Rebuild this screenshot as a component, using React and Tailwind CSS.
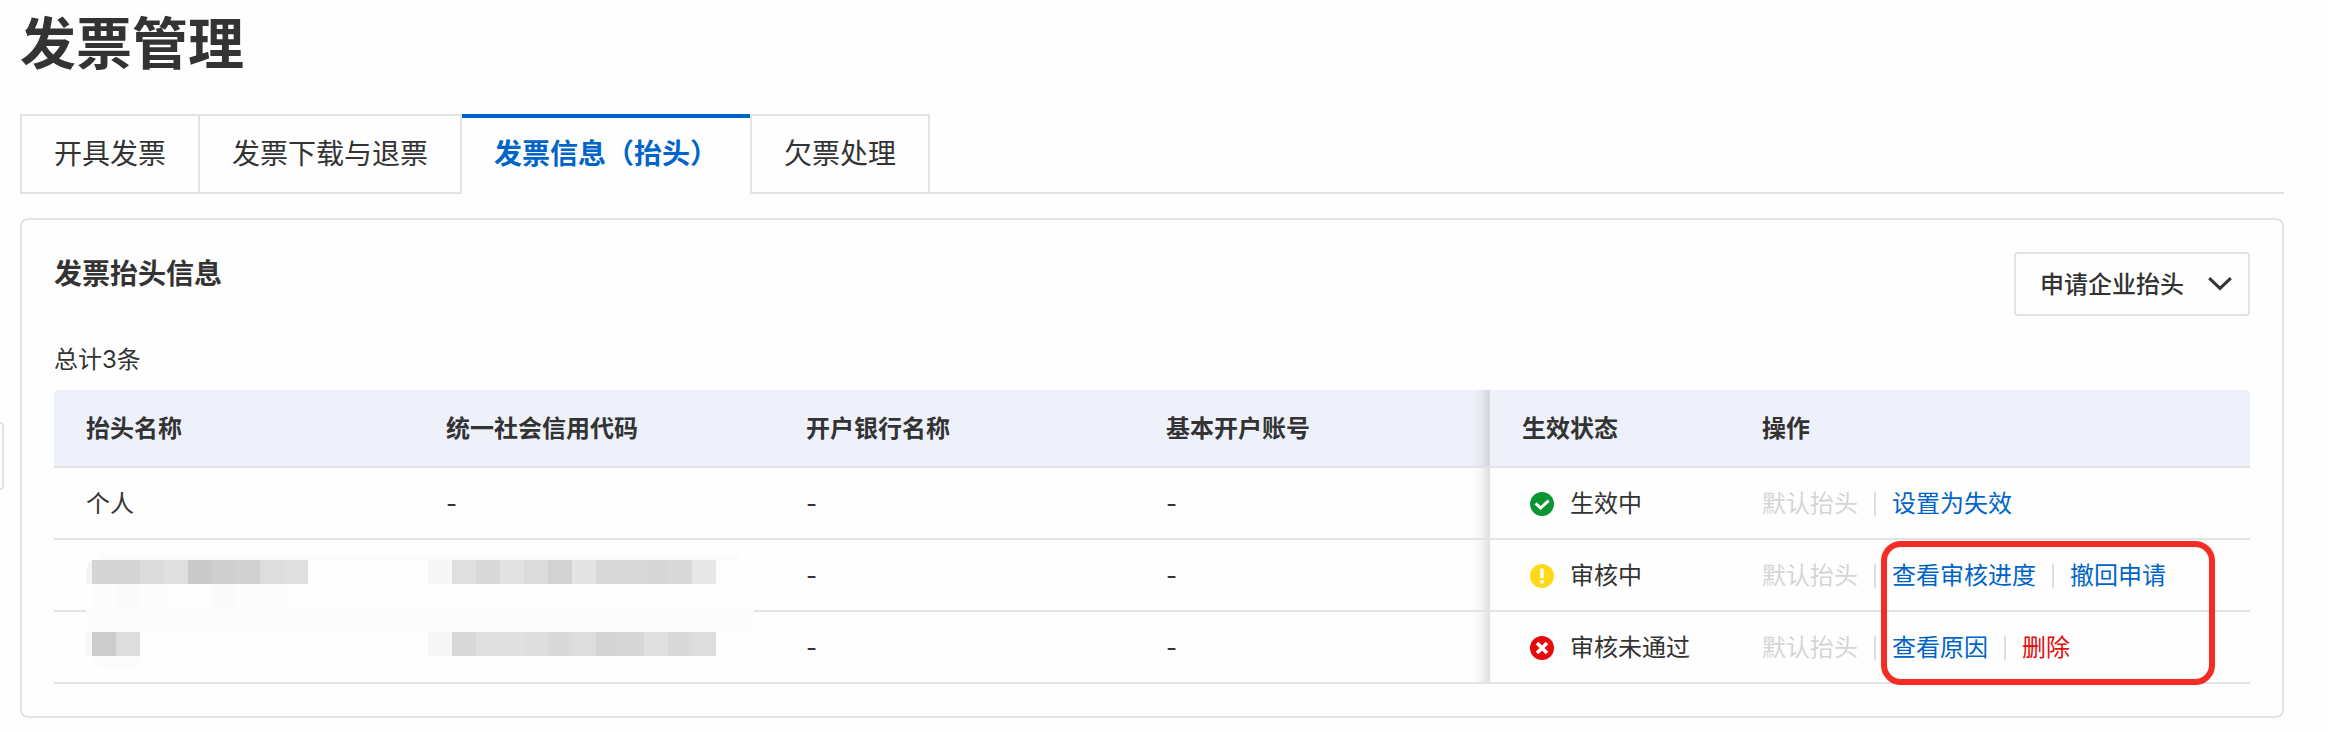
import { useState } from "react";
import clsx from "clsx";

const tabs = [
  { id: "issue", label: "开具发票" },
  { id: "download", label: "发票下载与退票" },
  { id: "titles", label: "发票信息（抬头）" },
  { id: "overdue", label: "欠票处理" },
];

const rows = [
  {
    id: 1,
    name: "个人",
    code: "-",
    status: "active",
    actions: [{ label: "设置为失效" }],
  },
  {
    id: 2,
    name: "",
    code: "",
    status: "pending",
    actions: [{ label: "查看审核进度" }, { label: "撤回申请" }],
  },
  {
    id: 3,
    name: "",
    code: "",
    status: "rejected",
    actions: [{ label: "查看原因" }, { label: "删除", danger: true }],
  },
];

// 24px tiles: [x, y, first-to-last fills]
const mosaic = [
  [6, 6, ["#d5d5d5", "#d4d4d4", "#dbdbdb", "#e0e0e0", "#cacaca", "#cfcfcf", "#d1d1d1", "#dddddd", "#dfdfdf"]],
  [6, 30, ["#fcfcfc", "#fafafa", "#fcfcfc", "#fdfdfd", "#fdfdfd", "#fafafa", "#fcfcfc", "#fcfcfc", "#fdfdfd"]],
  [342, 6, ["#f7f7f7", "#e0e0e0", "#d9d9d9", "#e1e1e1", "#dbdbdb", "#d2d2d2", "#e4e4e4", "#d9d9d9", "#d8d8d8", "#d7d7d7", "#d9d9d9", "#e8e8e8"]],
  [6, 78, ["#cccccc", "#dddddd"]],
  [342, 78, ["#f7f7f7", "#d9d9d9", "#e0e0e0", "#e0e0e0", "#dedede", "#d9d9d9", "#dddddd", "#d5d5d5", "#d6d6d6", "#e0e0e0", "#d9d9d9", "#dddddd"]],
];

function Mosaic() {
  return (
    <svg
      className="absolute left-8 top-[164px] h-[114px] w-[668px]"
      viewBox="0 0 668 114"
      shapeRendering="crispEdges"
      aria-hidden="true"
    >
      <rect width="668" height="114" rx="12" fill="#fefefe" />
      <rect y="20" width="668" height="70" fill="#fefefe" />
      <rect x="12" width="640" height="6" fill="#fbfbfb" />
      <rect y="54" width="668" height="24" fill="#fcfcfc" />
      <path d="M0 16Q1 9 6 6V30H0Z" fill="#f4f4f4" />
      <rect y="78" width="6" height="24" fill="#f6f6f6" />
      <path d="M6 102H54V114H16Q9 112 6 102Z" fill="#fbfbfb" />
      {mosaic.map(([x, y, fills]) =>
        fills.map((fill, i) => (
          <rect key={`${x}-${y}-${i}`} x={x + i * 24} y={y} width="24" height="24" fill={fill} />
        ))
      )}
    </svg>
  );
}

function StatusIcon({ type }) {
  return (
    <svg className="ml-2 size-6 shrink-0" viewBox="0 0 24 24" fill="none" aria-hidden="true">
      {type === "active" && (
        <>
          <circle cx="12" cy="12" r="12" fill="#0a9432" />
          <path d="M5.6 11.4L10.6 16L18.6 8.6" stroke="#fff" strokeWidth="3" />
        </>
      )}
      {type === "pending" && (
        <>
          <circle cx="12" cy="12" r="12" fill="#ffd91a" />
          <path d="M12 4.6V14M12 16.2V19.4" stroke="#fff" strokeWidth="3.4" />
        </>
      )}
      {type === "rejected" && (
        <>
          <circle cx="12" cy="12" r="12" fill="#e60b0b" />
          <path d="M7 7L17 17M17 7L7 17" stroke="#fff" strokeWidth="3.6" />
        </>
      )}
    </svg>
  );
}

const statusText = {
  active: "生效中",
  pending: "审核中",
  rejected: "审核未通过",
};

const cell = "h-[72px] border-b-2 border-[#e3e3e3] px-8 pt-0.5 text-left";
const headCell = "h-[78px] border-b-2 border-[#e3e3e3] bg-[#eef1f9] px-8 pt-0.5 text-left font-bold";
const fixedShadow =
  "bg-[linear-gradient(to_left,rgba(0,0,0,0.12),rgba(0,0,0,0.04)_50%,transparent)] bg-[length:18px_100%] bg-right bg-no-repeat";

export default function App() {
  const [activeTab, setActiveTab] = useState("titles");

  return (
    <div className="relative min-h-screen bg-[#fefefe] pt-3 pr-11 pb-3.5 pl-5 font-[Inter,'Noto_Sans_CJK_SC',sans-serif] text-2xl leading-8 text-[#333]">
      {/* Collapsed side menu handle */}
      <div className="absolute top-[422px] left-0 h-[68px] w-1 rounded-r-sm border-y-2 border-r-2 border-[#e3e3e3]" />

      <h1 className="mb-[38px] text-[56px] leading-[64px] font-bold">发票管理</h1>

      {/* Tabs */}
      <div role="tablist" className="mb-6 flex h-20">
        {tabs.map((tab, i) => {
          const active = tab.id === activeTab;
          const afterActive = i > 0 && tabs[i - 1].id === activeTab;

          return (
            <button
              key={tab.id}
              type="button"
              role="tab"
              aria-selected={active}
              onClick={() => setActiveTab(tab.id)}
              className={clsx(
                "px-8 text-[28px]",
                active
                  ? "border-t-4 border-[#0064c8] pb-1 font-bold text-[#0064c8]"
                  : "border-y-2 border-r-2 border-[#e3e3e3]",
                !active && (i === 0 || afterActive) && "border-l-2"
              )}
            >
              {tab.label}
            </button>
          );
        })}
        <div className="flex-1 border-b-2 border-[#e3e3e3]" />
      </div>

      <section className="rounded-lg border-2 border-[#e3e3e3] p-8">
        <div className="mb-6 flex items-start justify-between">
          <h2 className="pt-1 text-[28px] leading-9 font-bold">发票抬头信息</h2>
          <button
            type="button"
            aria-haspopup="menu"
            className="flex h-16 items-center gap-6 rounded border-2 border-[#e3e3e3] pt-0.5 pr-4 pl-6 font-medium"
          >
            申请企业抬头
            <svg className="size-6" viewBox="0 0 24 24" fill="none" aria-hidden="true">
              <path d="M1.2 5.2L12 15.4L22.8 5.2" stroke="#333" strokeWidth="3" />
            </svg>
          </button>
        </div>

        <p className="mb-2.5 leading-10">总计3条</p>

        <div className="relative">
          <table className="w-full table-fixed border-separate border-spacing-0">
            <colgroup>
              <col className="w-[360px]" />
              <col className="w-[360px]" />
              <col className="w-[360px]" />
              <col />
              <col className="w-[240px]" />
              <col className="w-[520px]" />
            </colgroup>
            <thead>
              <tr>
                <th className={clsx(headCell, "rounded-tl")}>抬头名称</th>
                <th className={headCell}>统一社会信用代码</th>
                <th className={headCell}>开户银行名称</th>
                <th className={clsx(headCell, fixedShadow)}>基本开户账号</th>
                <th className={headCell}>生效状态</th>
                <th className={clsx(headCell, "rounded-tr")}>操作</th>
              </tr>
            </thead>
            <tbody>
              {rows.map((row) => (
                <tr key={row.id}>
                  <td className={cell}>{row.name}</td>
                  <td className={cell}>{row.code}</td>
                  <td className={cell}>-</td>
                  <td className={clsx(cell, fixedShadow)}>-</td>
                  <td className={cell}>
                    <div className="flex items-center gap-4 whitespace-nowrap">
                      <StatusIcon type={row.status} />
                      {statusText[row.status]}
                    </div>
                  </td>
                  <td className={cell}>
                    <div className="flex items-center gap-4 whitespace-nowrap">
                      <button type="button" disabled className="text-[#d5d5d5]">
                        默认抬头
                      </button>
                      {row.actions.map((action) => (
                        <div key={action.label} className="flex items-center gap-4">
                          <span className="h-6 w-0.5 bg-[#dcdcdc]" />
                          <a href="#" className={action.danger ? "text-[#e60b0b]" : "text-[#0064c8]"}>
                            {action.label}
                          </a>
                        </div>
                      ))}
                    </div>
                  </td>
                </tr>
              ))}
            </tbody>
          </table>

          <Mosaic />

          {/* Highlight around the review actions */}
          <div className="pointer-events-none absolute top-[151px] right-[35px] h-36 w-[334px] rounded-[20px] border-6 border-[#f42c25]" />
        </div>
      </section>
    </div>
  );
}
